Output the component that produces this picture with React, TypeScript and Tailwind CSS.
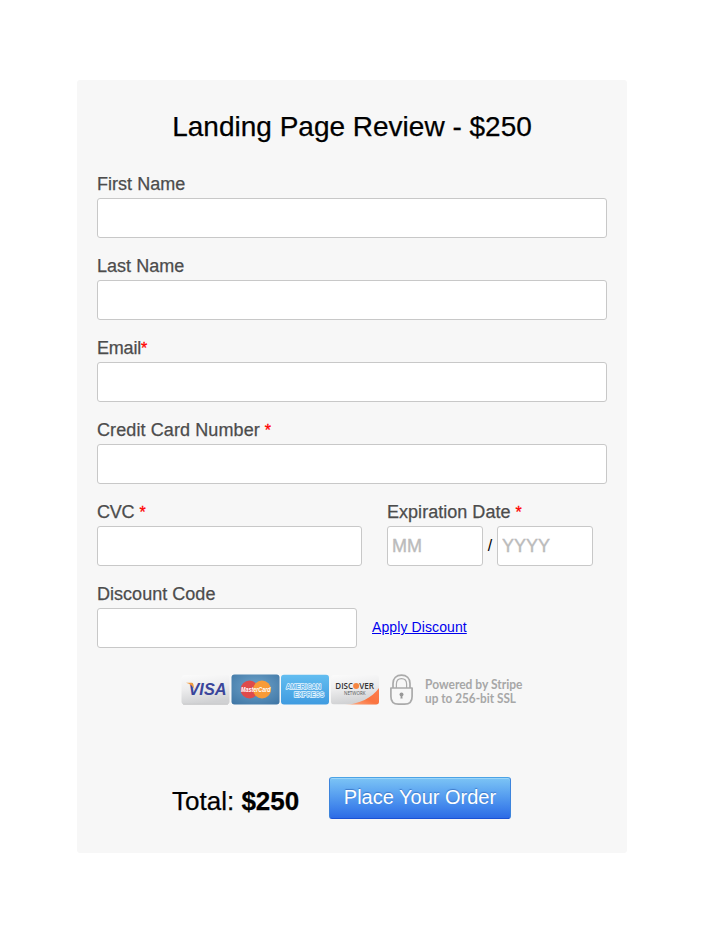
import React from "react";

function Label({ text, required, space = true }: { text: string; required?: boolean; space?: boolean }) {
  return (
    <label className="block h-[28px] whitespace-nowrap text-[18px] leading-[28px] text-[#4c4c4c] [-webkit-text-stroke:0.25px_#4c4c4c]">
      <span className={text.length > 15 ? "tracking-[0.1px]" : text.length < 6 ? "tracking-[-0.2px]" : "tracking-[0.03px]"}>{text}</span>
      {required && (
        <span className={`text-[16px] text-[#f00] [-webkit-text-stroke:0.3px_#f00] ${space ? "ml-[5px]" : ""}`}>*</span>
      )}
    </label>
  );
}

const box = "block h-[40px] rounded-[3px] border border-[#c8c8c8] bg-white px-1 text-[18px] outline-none placeholder:text-[#bbb] placeholder:opacity-100 placeholder:[-webkit-text-stroke:0.4px_#bbb]";

function Field({ label, required, space, width }: { label: string; required?: boolean; space?: boolean; width: string }) {
  return (
    <div>
      <Label text={label} required={required} space={space} />
      <input className={`${box} ${width}`} />
    </div>
  );
}

function Cards() {
  return (
    <svg width="344" height="36" viewBox="180 671 344 36" className="block overflow-visible">
      <defs>
        <linearGradient id="silver" x1="0" y1="0" x2="0.2" y2="1">
          <stop offset="0" stopColor="#fbfbfb" />
          <stop offset="0.5" stopColor="#ececed" />
          <stop offset="1" stopColor="#d0d1d3" />
        </linearGradient>
        <radialGradient id="navy" cx="0.5" cy="0.4" r="0.75">
          <stop offset="0" stopColor="#6fa4ca" />
          <stop offset="1" stopColor="#3f76a5" />
        </radialGradient>
        <linearGradient id="sky" x1="0" y1="0" x2="0" y2="1">
          <stop offset="0" stopColor="#62bdf0" />
          <stop offset="1" stopColor="#3f9be0" />
        </linearGradient>
        <linearGradient id="orange" x1="0" y1="1" x2="1" y2="0">
          <stop offset="0" stopColor="#ffb48d" />
          <stop offset="0.5" stopColor="#fa7440" />
          <stop offset="1" stopColor="#ff7d4c" />
        </linearGradient>
        <clipPath id="discover">
          <rect x="331" y="675" width="48" height="29.5" rx="3" />
        </clipPath>
      </defs>

      <rect x="181.5" y="675" width="48" height="29.5" rx="3" fill="url(#silver)" />
      <path d="M183 704.3h45" stroke="#b9babc" strokeWidth="0.6" />
      <text x="188.5" y="695.1" textLength="38" lengthAdjust="spacingAndGlyphs" fontFamily="'Liberation Sans', sans-serif" fontWeight="700" fontStyle="italic" fontSize="17" fill="#39459b">VISA</text>
      <path d="M186 682.8h5.200c1.300 0 1.900.5 2.200 1.700l1.100 5.300c-1.500-3.600-4.200-5.900-8.500-7z" fill="#f39a3b" />

      <rect x="231.500" y="674.500" width="48" height="30" rx="3" fill="url(#navy)" />
      <circle cx="249.500" cy="689.500" r="9" fill="#df4b4b" />
      <circle cx="262" cy="689.500" r="9" fill="#f99b37" />
      <text x="241" y="692" textLength="29.500" lengthAdjust="spacingAndGlyphs" fontFamily="'Liberation Sans', sans-serif" fontWeight="700" fontStyle="italic" fontSize="6.800" fill="#fff">MasterCard</text>

      <rect x="281" y="674.800" width="48" height="29.700" rx="3" fill="url(#sky)" />
      <g fontFamily="'Liberation Sans', sans-serif" fontWeight="700" fontSize="7.200" fill="#62b4ea" stroke="#e8f6ff" strokeWidth="1.500" paintOrder="stroke" strokeLinejoin="round">
        <text x="286" y="689" textLength="35" lengthAdjust="spacingAndGlyphs">AMERICAN</text>
        <text x="294" y="697" textLength="30" lengthAdjust="spacingAndGlyphs">EXPRESS</text>
      </g>

      <g clipPath="url(#discover)">
        <rect x="331" y="675" width="48" height="29.500" fill="url(#silver)" />
        <path d="M345 705c14-1 27-7 34-17v17z" fill="url(#orange)" />
      </g>
      <g fontFamily="'Open Sans', sans-serif" fontWeight="600" fontSize="8.300" fill="#343434">
        <text x="335.300" y="689" textLength="17.700" lengthAdjust="spacingAndGlyphs">DISC</text>
        <text x="359.200" y="689" textLength="14.900" lengthAdjust="spacingAndGlyphs">VER</text>
      </g>
      <circle cx="356.100" cy="686" r="3" fill="#f58540" />
      <text x="344" y="694.700" textLength="21.500" lengthAdjust="spacingAndGlyphs" fontFamily="'Open Sans', sans-serif" fontSize="4.400" fill="#555">NETWORK</text>

      <g fill="none" stroke="#aaa" strokeWidth="1.700">
        <path d="M390.900 688h21.200v8.500c0 5-3 7.700-7.500 7.700h-6.200c-4.500 0-7.500-2.700-7.500-7.700z" strokeLinejoin="round" />
        <path d="M393 688v-4.500c0-5.300 3.600-8.400 8.500-8.400s8.500 3.100 8.500 8.400v4.500" />
        <path d="M396.400 688v-4c0-3.500 2-5.400 5.100-5.400s5.100 1.900 5.100 5.400v4" strokeWidth="1.200" />
      </g>
      <circle cx="401.500" cy="694.600" r="2" fill="#999" />
      <path d="M400.900 695h1.200l.5 3.500h-2.200z" fill="#999" />
      <g fontFamily="Lato, sans-serif" fontWeight="700" fontSize="12.400" fill="#a7a7a7">
        <text x="425" y="688.700" textLength="97.500" lengthAdjust="spacingAndGlyphs">Powered by Stripe</text>
        <text x="425" y="702.500" textLength="91" lengthAdjust="spacingAndGlyphs">up to 256-bit SSL</text>
      </g>
    </svg>
  );
}

export default function App() {
  return (
    <div className="h-[928px] bg-white pl-[77px] pt-[80px] font-['Liberation_Sans',Arial,sans-serif] text-black">
      <form className="h-[773px] w-[550px] rounded-[3px] bg-[#f7f7f7] px-5">
        <h1 className="pt-[27px] text-center text-[28px] leading-[40px] [-webkit-text-stroke:0.25px_#000]">Landing Page Review - $250</h1>
        <div className="mt-[23px] flex flex-col gap-[14px]">
          <Field label="First Name" width="w-full" />
          <Field label="Last Name" width="w-full" />
          <Field label="Email" required space={false} width="w-full" />
          <Field label="Credit Card Number" required width="w-full" />
          <div className="flex gap-[25px]">
            <Field label="CVC" required width="w-[265px]" />
            <div>
              <Label text="Expiration Date" required />
              <div className="flex items-center">
                <input placeholder="MM" className={`${box} w-[96px]`} />
                <span className="w-[14px] text-center text-[16px]">/</span>
                <input placeholder="YYYY" className={`${box} w-[96px]`} />
              </div>
            </div>
          </div>
          <div className="flex items-end gap-[15px]">
            <Field label="Discount Code" width="w-[260px]" />
            <a href="#" className="mb-[11px] text-[14px] leading-[20px] tracking-[0.1px] text-[#0000ee] underline">Apply Discount</a>
          </div>
        </div>
        <div className="mt-[23px] pl-[83px]">
          <Cards />
        </div>
        <div className="mt-[70px] flex pl-[75px]">
          <div className="w-[157px] pt-[4px] text-[26px] leading-[40px] [-webkit-text-stroke:0.25px_#000]">
            Total: <b>$250</b>
          </div>
          <button
            type="button"
            className="h-[42px] w-[182px] rounded-[3px] border border-[#3d84dc] border-t-[#4ba3e6] border-b-[#1b52d3] bg-linear-to-b from-[#7cc4f5] to-[#2d6be6] pb-[2px] text-[20px] text-white shadow-[inset_0_1px_0_#9bd5f8] [text-shadow:0_-1px_1px_#3c78c8]"
          >
            Place Your Order
          </button>
        </div>
      </form>
    </div>
  );
}
